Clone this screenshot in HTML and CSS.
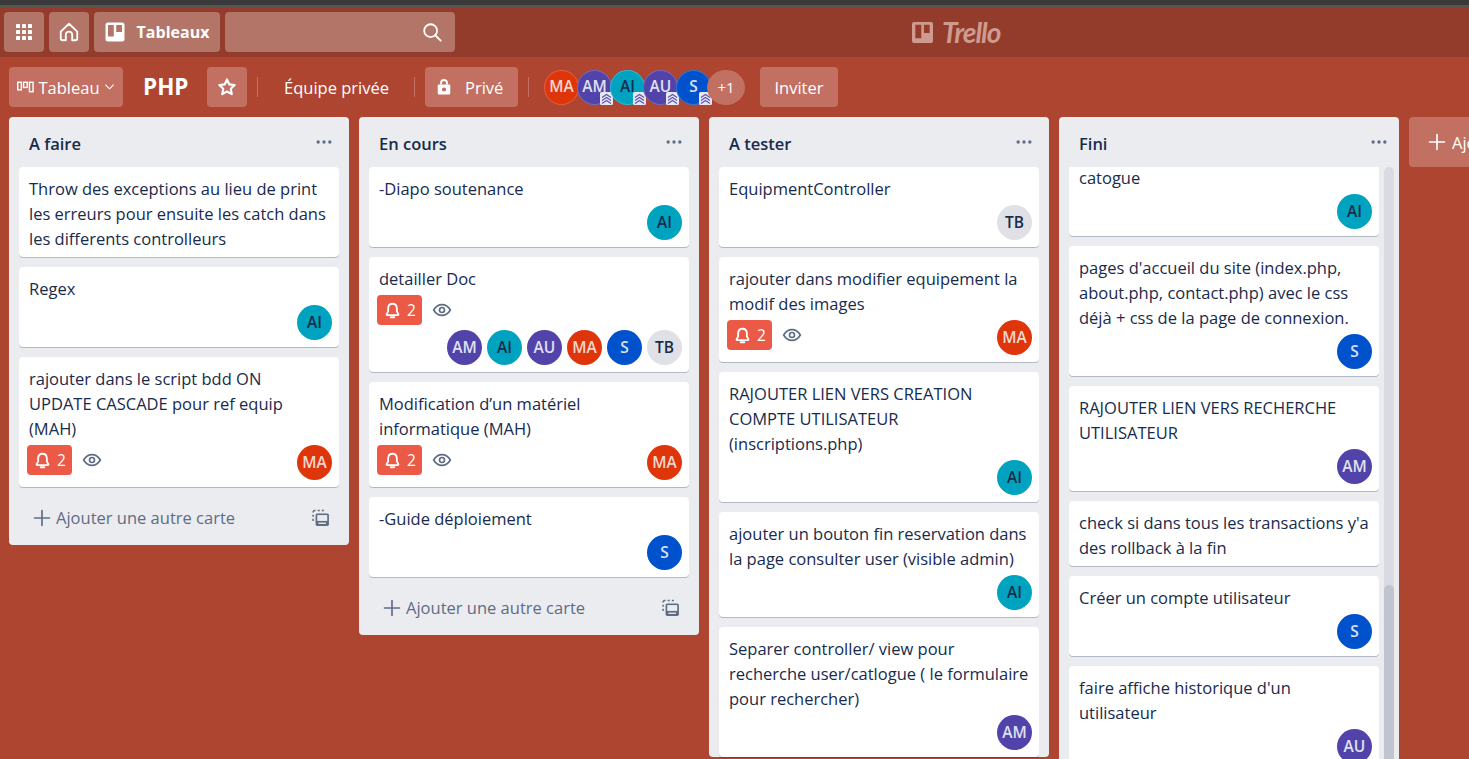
FILE: index.html
```html
<!DOCTYPE html>
<html lang="fr">
<head>
<meta charset="utf-8">
<title>PHP | Trello</title>
<link rel="stylesheet" href="styles.css">
</head>
<body>
<svg class="sprite" aria-hidden="true">
  <symbol id="i-bell" viewBox="0 0 24 24"><path d="M12 3.500c-3.400 0-5.500 2.600-5.500 6v3.600L4.600 16.600c-.3.600 0 1.200.7 1.200h13.400c.7 0 1-.6.7-1.200l-1.900-3.500V9.500c0-3.400-2.100-6-5.500-6zM9.700 20.500h4.600" fill="none" stroke="currentColor" stroke-width="2.300" stroke-linejoin="round" stroke-linecap="round"/></symbol>
  <symbol id="i-eye" viewBox="0 0 24 24"><path d="M2 12c2.500-4.300 5.800-6.500 10-6.500S19.500 7.700 22 12c-2.500 4.300-5.800 6.500-10 6.500S4.500 16.300 2 12z" fill="none" stroke="currentColor" stroke-width="2"/><circle cx="12" cy="12" r="3" fill="none" stroke="currentColor" stroke-width="2"/></symbol>
  <symbol id="i-plus" viewBox="0 0 24 24"><path d="M12 3v18M3 12h18" stroke="currentColor" stroke-width="2" fill="none" stroke-linecap="round"/></symbol>
  <symbol id="i-tpl" viewBox="0 0 24 24"><rect x="5.500" y="6.500" width="16" height="15" rx="2" fill="currentColor"/><rect x="7.500" y="8.500" width="12" height="7" fill="#ebecf0"/><rect x="9" y="17.500" width="9" height="1.600" fill="#ebecf0"/><path d="M2.500 5.500V5a2 2 0 0 1 2-2h1M8 3h2.500M13 3h2.500M2.500 8v2.500M2.500 13v2.500" stroke="currentColor" stroke-width="1.800" fill="none"/></symbol>
  <symbol id="i-up" viewBox="0 0 13 13"><rect width="13" height="13" rx="1.500" fill="#e6e8f0"/><path d="M2 5.500 6.500 2.500l4.500 3M2 8.500l4.500-3 4.500 3M2 11.500l4.500-3 4.500 3" fill="none" stroke="#5f52b5" stroke-width="1.200"/></symbol>
  <symbol id="i-dots" viewBox="0 0 24 24"><circle cx="5" cy="12" r="2" fill="currentColor"/><circle cx="12" cy="12" r="2" fill="currentColor"/><circle cx="19" cy="12" r="2" fill="currentColor"/></symbol>
</svg>

<div class="chrome"></div>

<header class="topbar">
  <button class="top-btn square" aria-label="Applications">
    <svg class="ic20" viewBox="0 0 20 20"><g fill="currentColor"><rect x="2" y="2" width="4" height="4" rx=".6"/><rect x="8" y="2" width="4" height="4" rx=".6"/><rect x="14" y="2" width="4" height="4" rx=".6"/><rect x="2" y="8" width="4" height="4" rx=".6"/><rect x="8" y="8" width="4" height="4" rx=".6"/><rect x="14" y="8" width="4" height="4" rx=".6"/><rect x="2" y="14" width="4" height="4" rx=".6"/><rect x="8" y="14" width="4" height="4" rx=".6"/><rect x="14" y="14" width="4" height="4" rx=".6"/></g></svg>
  </button>
  <button class="top-btn square" aria-label="Accueil">
    <svg class="ic22" viewBox="0 0 24 24"><path d="M3 11.500 12 3l9 8.500V19a2 2 0 0 1-2 2h-3.500v-6a3.500 3.500 0 0 0-7 0v6H5a2 2 0 0 1-2-2z" fill="none" stroke="currentColor" stroke-width="2" stroke-linejoin="round"/></svg>
  </button>
  <button class="top-btn boards">
    <svg class="ic20" viewBox="0 0 20 20"><rect x=".5" y=".5" width="19" height="19" rx="2.500" fill="currentColor"/><rect x="3" y="3" width="5.800" height="11.500" rx=".6" fill="#b27567"/><rect x="11.200" y="3" width="5.800" height="7" rx=".6" fill="#b27567"/></svg>
    <span>Tableaux</span>
  </button>
  <div class="search">
    <svg class="ic22" viewBox="0 0 24 24"><circle cx="10.500" cy="10.500" r="7" fill="none" stroke="currentColor" stroke-width="2"/><path d="m15.800 15.800 5.700 5.700" stroke="currentColor" stroke-width="2" stroke-linecap="round"/></svg>
  </div>
  <div class="logo">
    <svg class="logo-mark" viewBox="0 0 22 22"><path fill-rule="evenodd" d="M2 0h18a2 2 0 0 1 2 2v18a2 2 0 0 1-2 2H2a2 2 0 0 1-2-2V2a2 2 0 0 1 2-2zm1.500 3v14h6.200V3zm9 0v8.500h6V3z" fill="currentColor"/></svg>
    <span class="logo-word">Trello</span>
  </div>
</header>

<nav class="boardbar">
  <button class="bar-btn view">
    <svg class="ic-view" viewBox="0 0 18 12"><g fill="none" stroke="currentColor" stroke-width="1.500"><rect x=".8" y="1" width="3.800" height="8"/><rect x="7" y="1" width="3.800" height="5.500"/><rect x="13.200" y="1" width="3.800" height="10"/></g></svg>
    <span>Tableau</span>
    <svg class="ic-chev" viewBox="0 0 12 8"><path d="m1.500 1.500 4.500 4.500 4.500-4.500" fill="none" stroke="currentColor" stroke-width="1.200"/></svg>
  </button>
  <h1 class="board-name">PHP</h1>
  <button class="bar-btn star" aria-label="Favori">
    <svg class="ic18" viewBox="0 0 24 24"><path d="m12 3 2.800 5.900 6.400.8-4.700 4.400 1.200 6.400-5.700-3.100-5.700 3.100 1.200-6.400-4.700-4.400 6.400-.8z" fill="none" stroke="currentColor" stroke-width="2.600" stroke-linejoin="round"/></svg>
  </button>
  <span class="divider first"></span>
  <span class="team">Équipe privée</span>
  <span class="divider second"></span>
  <button class="bar-btn private">
    <svg class="ic18" viewBox="0 0 24 24"><path d="M8.500 9V7a3.500 3.500 0 0 1 7 0v2" fill="none" stroke="currentColor" stroke-width="2.400"/><path fill-rule="evenodd" d="M6 9h12a1.500 1.500 0 0 1 1.500 1.500v9A1.500 1.500 0 0 1 18 21H6a1.500 1.500 0 0 1-1.500-1.500v-9A1.500 1.500 0 0 1 6 9zm6 3.500a2.500 2.500 0 1 0 0 5 2.500 2.500 0 0 0 0-5z" fill="currentColor"/></svg>
    <span>Privé</span>
  </button>
  <span class="divider third"></span>
  <div class="members">
    <span class="avatar ma">MA</span>
    <span class="avatar am">AM<svg class="up"><use href="#i-up"/></svg></span>
    <span class="avatar ai">AI<svg class="up"><use href="#i-up"/></svg></span>
    <span class="avatar au">AU<svg class="up"><use href="#i-up"/></svg></span>
    <span class="avatar s">S<svg class="up"><use href="#i-up"/></svg></span>
    <span class="avatar more">+1</span>
  </div>
  <button class="bar-btn invite">Inviter</button>
</nav>

<main class="board">
  <section class="list">
    <div class="list-head"><h2>A faire</h2><svg class="dots"><use href="#i-dots"/></svg></div>
    <div class="cards">
      <article class="card"><p>Throw des exceptions au lieu de print les erreurs pour ensuite les catch dans les differents controlleurs</p></article>
      <article class="card"><p>Regex</p><div class="meta"><div class="people"><span class="avatar ai">AI</span></div></div></article>
      <article class="card"><p>rajouter dans le script bdd ON<br>UPDATE CASCADE pour ref equip<br>(MAH)</p><div class="meta"><span class="due"><svg><use href="#i-bell"/></svg>2</span><svg class="watch"><use href="#i-eye"/></svg><div class="people"><span class="avatar ma">MA</span></div></div></article>
    </div>
    <div class="list-foot"><svg class="plus"><use href="#i-plus"/></svg><span>Ajouter une autre carte</span><svg class="tpl"><use href="#i-tpl"/></svg></div>
  </section>

  <section class="list">
    <div class="list-head"><h2>En cours</h2><svg class="dots"><use href="#i-dots"/></svg></div>
    <div class="cards">
      <article class="card"><p>-Diapo soutenance</p><div class="meta"><div class="people"><span class="avatar ai">AI</span></div></div></article>
      <article class="card"><p>detailler Doc</p><div class="meta"><span class="due"><svg><use href="#i-bell"/></svg>2</span><svg class="watch"><use href="#i-eye"/></svg><div class="people"><span class="avatar am">AM</span><span class="avatar ai">AI</span><span class="avatar au">AU</span><span class="avatar ma">MA</span><span class="avatar s">S</span><span class="avatar tb">TB</span></div></div></article>
      <article class="card"><p>Modification d’un matériel informatique (MAH)</p><div class="meta"><span class="due"><svg><use href="#i-bell"/></svg>2</span><svg class="watch"><use href="#i-eye"/></svg><div class="people"><span class="avatar ma">MA</span></div></div></article>
      <article class="card"><p>-Guide déploiement</p><div class="meta"><div class="people"><span class="avatar s">S</span></div></div></article>
    </div>
    <div class="list-foot"><svg class="plus"><use href="#i-plus"/></svg><span>Ajouter une autre carte</span><svg class="tpl"><use href="#i-tpl"/></svg></div>
  </section>

  <section class="list">
    <div class="list-head"><h2>A tester</h2><svg class="dots"><use href="#i-dots"/></svg></div>
    <div class="cards">
      <article class="card"><p>EquipmentController</p><div class="meta"><div class="people"><span class="avatar tb">TB</span></div></div></article>
      <article class="card"><p>rajouter dans modifier equipement la modif des images</p><div class="meta"><span class="due"><svg><use href="#i-bell"/></svg>2</span><svg class="watch"><use href="#i-eye"/></svg><div class="people"><span class="avatar ma">MA</span></div></div></article>
      <article class="card"><p>RAJOUTER LIEN VERS CREATION COMPTE UTILISATEUR (inscriptions.php)</p><div class="meta"><div class="people"><span class="avatar ai">AI</span></div></div></article>
      <article class="card"><p>ajouter un bouton fin reservation dans la page consulter user (visible admin)</p><div class="meta"><div class="people"><span class="avatar ai">AI</span></div></div></article>
      <article class="card"><p>Separer controller/ view pour recherche user/catlogue ( le formulaire pour rechercher)</p><div class="meta"><div class="people"><span class="avatar am">AM</span></div></div></article>
    </div>
  </section>

  <section class="list scrolled">
    <div class="list-head"><h2>Fini</h2><svg class="dots"><use href="#i-dots"/></svg></div>
    <div class="scroll-area">
      <div class="cards">
        <article class="card clipped"><p>catogue</p><div class="meta"><div class="people"><span class="avatar ai">AI</span></div></div></article>
        <article class="card"><p>pages d'accueil du site (index.php, about.php, contact.php) avec le css déjà + css de la page de connexion.</p><div class="meta"><div class="people"><span class="avatar s">S</span></div></div></article>
        <article class="card"><p>RAJOUTER LIEN VERS RECHERCHE UTILISATEUR</p><div class="meta"><div class="people"><span class="avatar am">AM</span></div></div></article>
        <article class="card"><p>check si dans tous les transactions y'a des rollback à la fin</p></article>
        <article class="card"><p>Créer un compte utilisateur</p><div class="meta"><div class="people"><span class="avatar s">S</span></div></div></article>
        <article class="card"><p>faire affiche historique d'un utilisateur</p><div class="meta"><div class="people"><span class="avatar au">AU</span></div></div></article>
      </div>
      <div class="scrollbar"><div class="thumb"></div></div>
    </div>
  </section>

  <button class="add-list"><svg class="plus"><use href="#i-plus"/></svg><span>Ajouter une autre liste</span></button>
</main>
</body>
</html>
```

FILE: styles.css
```css
* { box-sizing: border-box; }
html, body { height: 100%; }
body {
  margin: 0;
  height: 759px;
  overflow: hidden;
  background: #ae4531;
  color: #172b4d;
  font-family: "Open Sans", "Noto Sans", sans-serif;
  font-size: 16.5px;
  display: flex;
  flex-direction: column;
}
button { font: inherit; color: inherit; border: 0; padding: 0; margin: 0; cursor: pointer; }
h1, h2, p { margin: 0; }
svg { display: block; flex: none; }
.sprite { position: absolute; width: 0; height: 0; }

.chrome { flex: none; height: 7px; background: #3a3a3a; border-bottom: 2px solid #555; }

.topbar {
  flex: none;
  height: 50px;
  display: flex;
  align-items: center;
  padding: 0 4px;
  gap: 5px;
  background: #933c2b;
  color: #fff;
}
.top-btn {
  height: 40px;
  border-radius: 4px;
  background: #b27567;
  display: flex;
  align-items: center;
  justify-content: center;
}
.top-btn.square { width: 40px; }
.top-btn.boards { width: 126px; gap: 12px; font-weight: 700; font-size: 16px; }
.ic20 { width: 20px; height: 20px; }
.ic22 { width: 22px; height: 22px; }
.ic18 { width: 20px; height: 20px; }
.search {
  width: 230px;
  height: 40px;
  border-radius: 4px;
  background: #b27567;
  display: flex;
  align-items: center;
  justify-content: flex-end;
  padding-right: 12px;
}
.logo {
  margin-left: 452px;
  display: flex;
  align-items: center;
  gap: 9px;
  color: #cf9a8f;
}
.logo-mark { width: 21px; height: 21px; }
.logo-word {
  font-family: "Lato", "Liberation Sans", sans-serif;
  font-style: italic;
  font-weight: 700;
  font-size: 28px;
  letter-spacing: -1px;
  line-height: 30px;
}

.boardbar {
  flex: none;
  height: 60px;
  padding-left: 9px;
  display: flex;
  align-items: center;
  color: #fff;
}
.bar-btn {
  height: 40px;
  border-radius: 4px;
  background: #c27062;
  display: flex;
  align-items: center;
  justify-content: center;
}
.bar-btn.view { width: 114px; gap: 4px; }
.ic-view { width: 17px; height: 12px; }
.ic-chev { width: 11px; height: 8px; }
.board-name { margin-left: 20px; width: 64px; font-size: 22.500px; font-weight: 700; line-height: 40px; }
.bar-btn.star { width: 40px; }
.divider { width: 1px; height: 20px; background: #c27062; flex: none; }
.divider.first { margin-left: 10px; }
.team { width: 105px; margin-left: 26px; white-space: nowrap; }
.divider.second { margin-left: 25px; }
.bar-btn.private { width: 93px; margin-left: 10px; gap: 11px; justify-content: flex-start; padding-left: 9px; }
.divider.third { margin-left: 10px; }
.members { display: flex; margin-left: 15px; }
.members .avatar { margin-right: -2px; }
.members .avatar.ma, .members .avatar.am, .members .avatar.ai, .members .avatar.au, .members .avatar.s { box-shadow: inset 0 0 0 1px rgba(255, 255, 255, .2); }
.members .avatar.more { width: 38px; height: 35px; margin-left: -2px; margin-right: 0; background: #c27062; color: #fff; font-weight: 400; font-size: 15px; border-radius: 50%; }
.up { position: absolute; right: -1px; bottom: 0; width: 13px; height: 13px; }
.bar-btn.invite { width: 78px; margin-left: 15px; }

.avatar {
  position: relative;
  flex: none;
  width: 35px;
  height: 35px;
  border-radius: 50%;
  display: flex;
  align-items: center;
  justify-content: center;
  font-size: 15.500px;
  font-weight: 600;
  line-height: 1;
}
.avatar.ma { background: #de350b; color: #f5d7cf; }
.avatar.am, .avatar.au { background: #5243aa; color: #dfe1f0; }
.avatar.ai { background: #00a3bf; color: #172b4d; }
.avatar.s { background: #0052cc; color: #dfe1f0; }
.avatar.tb { background: #dfe1e6; color: #172b4d; }

.board {
  flex: 1;
  min-height: 0;
  display: flex;
  align-items: flex-start;
  gap: 10px;
  padding-left: 9px;
  overflow: hidden;
}
.list {
  flex: none;
  width: 340px;
  background: #ebecf0;
  border-radius: 4px;
  padding: 0 10px;
}
.list-head { height: 50px; display: flex; align-items: center; justify-content: space-between; padding: 3px 5px 0 10px; }
.list-head h2 { font-size: 16.500px; font-weight: 600; line-height: 25px; }
.dots { width: 20px; height: 20px; color: #5e6c84; margin-top: -4px; }
.cards { display: flex; flex-direction: column; gap: 10px; }
.card {
  background: #fff;
  border-radius: 4px;
  box-shadow: 0 1px 0 rgba(9, 30, 66, .25);
  padding: 9px 7px 7px 10px;
}
.card > p { line-height: 25px; color: #172b4d; }
.card > p:only-child { margin-bottom: -1px; }
.meta {
  margin-top: 4px;
  display: flex;
  flex-wrap: wrap;
  align-items: flex-start;
  row-gap: 5px;
}
.due {
  width: 45px;
  height: 30px;
  margin-left: -2px;
  border-radius: 4px;
  background: #eb5a46;
  color: #fff;
  display: flex;
  align-items: center;
  justify-content: center;
  gap: 5px;
  font-size: 15.500px;
}
.due svg { width: 19px; height: 19px; }
.watch { width: 20px; height: 20px; margin: 5px 0 0 10px; color: #5e6c84; }
.people { margin-left: auto; display: flex; gap: 5px; }
.list-foot { height: 58px; display: flex; align-items: center; color: #5e6c84; padding: 3px 8px 0 13px; }
.list-foot .plus { width: 20px; height: 20px; }
.list-foot span { margin-left: 4px; flex: 1; }
.tpl { width: 20px; height: 20px; }

.scrolled { height: 700px; padding-right: 5px; }
.scroll-area { display: flex; gap: 5px; height: 100%; }
.scroll-area .cards { width: 310px; flex: none; }
.clipped { border-radius: 0 0 4px 4px; padding-top: 0; overflow: hidden; }
.clipped > p { margin-top: -2px; }
.scrollbar { flex: none; width: 10px; background: #dadbe2; border-radius: 5px 5px 0 0; padding-top: 418px; }
.thumb { height: 300px; background: #bfc4ce; border-radius: 5px 5px 0 0; }

.add-list {
  flex: none;
  width: 340px;
  height: 50px;
  border-radius: 4px;
  background: #c27062;
  color: #fff;
  display: flex;
  align-items: center;
  gap: 5px;
  padding-left: 18px;
  text-align: left;
}
.add-list .plus { width: 20px; height: 20px; }
```
